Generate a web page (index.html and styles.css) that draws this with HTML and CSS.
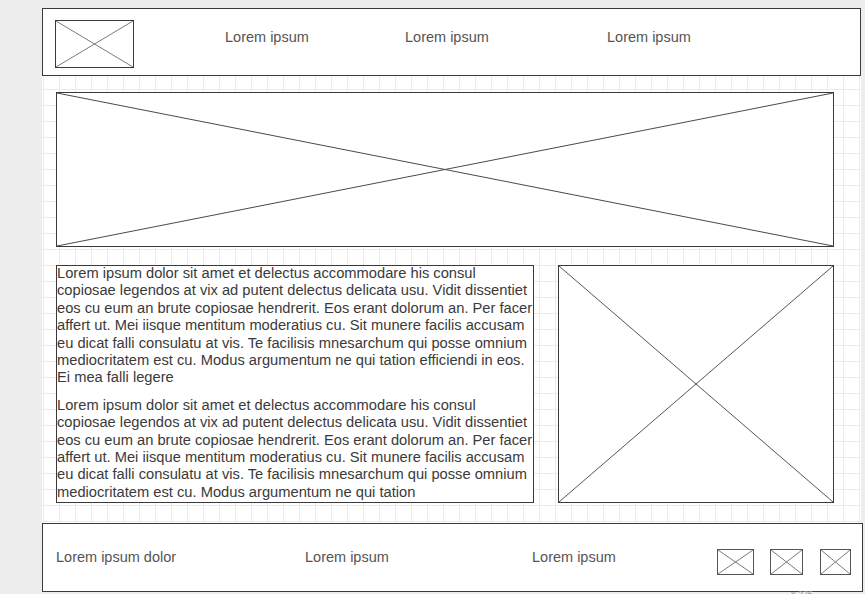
FILE: index.html
```html
<!DOCTYPE html>
<html>
<head>
  <link rel="stylesheet" href="styles.css">
</head>
<body>

<div class="canvas">
  <div class="topbar">
    <div class="ph logo">
      <svg viewBox="0 0 100 100" preserveAspectRatio="none"><path d="M0 0L100 100M100 0L0 100"/></svg>
    </div>
    <div class="nav">
      <span class="nav-link">Lorem ipsum</span>
      <span class="nav-link">Lorem ipsum</span>
      <span class="nav-link">Lorem ipsum</span>
    </div>
  </div>

  <div class="ph hero">
    <svg viewBox="0 0 100 100" preserveAspectRatio="none"><path d="M0 0L100 100M100 0L0 100"/></svg>
  </div>

  <div class="content">
    <div class="copy">
      <p>Lorem ipsum dolor sit amet et delectus accommodare his consul<br>
      copiosae legendos at vix ad putent delectus delicata usu. Vidit dissentiet<br>
      eos cu eum an brute copiosae hendrerit. Eos erant dolorum an. Per facer<br>
      affert ut. Mei iisque mentitum moderatius cu. Sit munere facilis accusam<br>
      eu dicat falli consulatu at vis. Te facilisis mnesarchum qui posse omnium<br>
      mediocritatem est cu. Modus argumentum ne qui tation efficiendi in eos.<br>
      Ei mea falli legere</p>
      <p>Lorem ipsum dolor sit amet et delectus accommodare his consul<br>
      copiosae legendos at vix ad putent delectus delicata usu. Vidit dissentiet<br>
      eos cu eum an brute copiosae hendrerit. Eos erant dolorum an. Per facer<br>
      affert ut. Mei iisque mentitum moderatius cu. Sit munere facilis accusam<br>
      eu dicat falli consulatu at vis. Te facilisis mnesarchum qui posse omnium<br>
      mediocritatem est cu. Modus argumentum ne qui tation</p>
    </div>
    <div class="ph side-image">
      <svg viewBox="0 0 100 100" preserveAspectRatio="none"><path d="M0 0L100 100M100 0L0 100"/></svg>
    </div>
  </div>

  <div class="footer">
    <span class="footer-link">Lorem ipsum dolor</span>
    <span class="footer-link">Lorem ipsum</span>
    <span class="footer-link">Lorem ipsum</span>
    <div class="social">
      <div class="ph icon icon-lg">
        <svg viewBox="0 0 100 100" preserveAspectRatio="none"><path d="M0 0L100 100M100 0L0 100"/></svg>
      </div>
      <div class="ph icon icon-md">
        <svg viewBox="0 0 100 100" preserveAspectRatio="none"><path d="M0 0L100 100M100 0L0 100"/></svg>
      </div>
      <div class="ph icon icon-sm">
        <svg viewBox="0 0 100 100" preserveAspectRatio="none"><path d="M0 0L100 100M100 0L0 100"/></svg>
      </div>
    </div>
  </div>
</div>

<div class="note">x 275</div>

</body>
</html>
```

FILE: styles.css
```css
body {
  margin: 0;
  padding: 8px 0 0 42px;
  background-color: #ededed;
  font-family: "Liberation Sans", Arial, sans-serif;
  overflow: hidden;
}

.canvas {
  width: 819px;
  background-color: #fff;
  background-image:
    linear-gradient(to right, #ebebeb 1px, transparent 1px),
    linear-gradient(to bottom, #ebebeb 1px, transparent 1px);
  background-size: 16px 16px;
  background-position: 1px 1px;
}

/* placeholder boxes with a cross */
.ph {
  box-sizing: border-box;
  border: 1px solid #3a3a3a;
  background-color: #fff;
}

.ph svg {
  display: block;
  width: 100%;
  height: 100%;
}

.ph path {
  fill: none;
  stroke: #4a4a4a;
  stroke-width: 1;
  vector-effect: non-scaling-stroke;
}

.topbar {
  box-sizing: border-box;
  display: flex;
  align-items: flex-start;
  height: 68px;
  padding: 11px 0 0 12px;
  border: 1px solid #3a3a3a;
  background-color: #fff;
}

.logo {
  width: 79px;
  height: 48px;
}

.logo path {
  stroke: #7a7a7a;
}

.nav {
  display: grid;
  grid-template-columns: 180px 202px auto;
  margin: 9px 0 0 91px;
}

.nav-link,
.footer-link {
  font-size: 14.5px;
  line-height: 17px;
  color: #555;
}

.hero {
  width: 778px;
  height: 155px;
  margin: 16px 0 0 14px;
}

.content {
  display: flex;
  gap: 24px;
  margin: 18px 0 0 14px;
}

.copy {
  box-sizing: border-box;
  width: 478px;
  height: 238px;
  border: 1px solid #3a3a3a;
  background-color: #fff;
  font-size: 14.7px;
  line-height: 17.4px;
  color: #3a3a3a;
  white-space: nowrap;
}

.copy p {
  margin: -1px 0 11px;
}

.side-image {
  width: 276px;
  height: 238px;
}

.side-image path {
  stroke: #555;
}

.footer {
  box-sizing: border-box;
  display: grid;
  grid-template-columns: 249px 227px 185px auto;
  align-items: start;
  width: 821px;
  height: 69px;
  margin-top: 20px;
  padding-left: 13px;
  border: 1px solid #3a3a3a;
  background-color: #fff;
}

.footer-link {
  margin-top: 25px;
}

.social {
  display: flex;
  margin-top: 25px;
}

.icon {
  height: 26px;
  border-color: #555;
}

.icon path {
  stroke: #7a7a7a;
}

.icon-lg {
  width: 37px;
}

.icon-md {
  width: 33px;
  margin-left: 16px;
}

.icon-sm {
  width: 31px;
  margin-left: 17px;
}

.note {
  margin: -3px 0 0 749px;
  font-size: 9px;
  color: #888;
}
```
